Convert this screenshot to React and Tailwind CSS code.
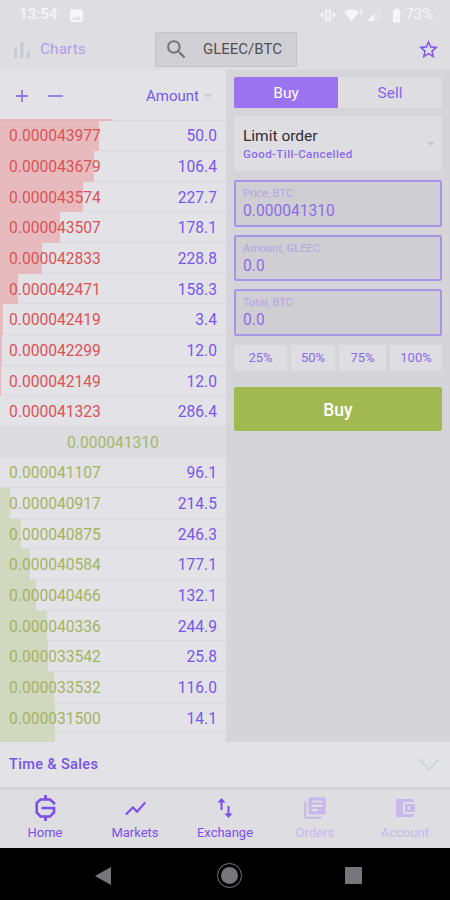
import { MdSearch, MdStarBorder, MdShowChart, MdLibraryBooks, MdAccountBalanceWallet, MdImage, MdBatteryFull } from 'react-icons/md'

const asks = [
  { price: '0.000043977', amount: '50.0', depth: 99 },
  { price: '0.000043679', amount: '106.4', depth: 94 },
  { price: '0.000043574', amount: '227.7', depth: 83 },
  { price: '0.000043507', amount: '178.1', depth: 60 },
  { price: '0.000042833', amount: '228.8', depth: 42 },
  { price: '0.000042471', amount: '158.3', depth: 18 },
  { price: '0.000042419', amount: '3.4', depth: 3 },
  { price: '0.000042299', amount: '12.0', depth: 2 },
  { price: '0.000042149', amount: '12.0', depth: 1 },
  { price: '0.000041323', amount: '286.4', depth: 0 },
]

const bids = [
  { price: '0.000041107', amount: '96.1', depth: 0 },
  { price: '0.000040917', amount: '214.5', depth: 10 },
  { price: '0.000040875', amount: '246.3', depth: 21 },
  { price: '0.000040584', amount: '177.1', depth: 30 },
  { price: '0.000040466', amount: '132.1', depth: 36 },
  { price: '0.000040336', amount: '244.9', depth: 47 },
  { price: '0.000033542', amount: '25.8', depth: 48 },
  { price: '0.000033532', amount: '116.0', depth: 54 },
  { price: '0.000031500', amount: '14.1', depth: 55 },
]

function StatusBar() {
  return (
    <div className="h-7 shrink-0 flex items-center pl-[19px] pr-[17px] pt-[2px] text-[#f6f5f8] text-[15.5px] font-medium">
      <span className="tracking-[-0.2px]">13:54</span>
      <MdImage className="ml-[11px] size-[17px]" />
      <svg viewBox="0 0 16 14" className="ml-auto w-4 h-[14px] opacity-80" fill="currentColor">
        <path d="M5 1h6v12H5zM3.6 3v8L0 7zM12.4 3v8L16 7z" />
        <path d="M7.4 3.5h1.2v7H7.4z" fill="#d9d8dc" />
      </svg>
      <svg viewBox="0 0 20 14" className="ml-2 w-5 h-[14px]" fill="currentColor">
        <path d="M0 4Q7.5-2 15 4L7.5 13zM16 1h2v2h-2zM16 4h2v2h-2z" />
      </svg>
      <svg viewBox="0 0 15 14" className="ml-[3px] w-[15px] h-[14px]" fill="currentColor">
        <path d="M0 13L7 6v7z" />
        <path d="M7 6l7-6v13H7z" opacity=".25" />
      </svg>
      <MdBatteryFull className="ml-[6px] size-[17px]" />
      <span className="font-normal tracking-[-0.3px]">73%</span>
    </div>
  )
}

function Header() {
  return (
    <div className="h-[42px] shrink-0 flex items-center justify-between pl-[12px] pr-[10px]">
      <div className="flex items-center w-[143px] pt-[1px] text-[#b19fe9] text-[15.5px]">
        <svg viewBox="0 0 20 16" className="w-5 h-4 mr-[8px]" fill="#c8cad2">
          <path d="M2 5h3v11H2zM8.5 0h3v16h-3zM15 9h3v7h-3z" />
        </svg>
        Charts
      </div>
      <div className="flex items-center w-[142px] h-[35px] rounded-[2px] border border-[#c4c3c8] bg-[#d0cfd4] pl-[8px] text-[#515056] text-[15px]">
        <MdSearch className="size-[25px] text-[#77767a]" />
        <span className="ml-[14px] pt-[1px]">GLEEC/BTC</span>
      </div>
      <div className="w-[143px] flex justify-end">
        <MdStarBorder className="size-[23px] text-[#8058ed]" />
      </div>
    </div>
  )
}

function Row({ row, bar, text }) {
  return (
    <div className="relative h-[30.65px] flex items-center justify-between pl-[9px] pr-[9px] pt-[3.5px] border-b border-[#dad9dd] text-[15.6px]">
      <div className={`absolute left-0 top-0 bottom-[-1px] ${bar}`} style={{ width: row.depth }} />
      <span className={`relative ${text}`}>{row.price}</span>
      <span className="relative text-[#7857ec]">{row.amount}</span>
    </div>
  )
}

function OrderBook() {
  return (
    <div className="w-[226px] h-full overflow-hidden bg-[#e3e2e6]">
      <div className="h-[48.5px] flex items-center pl-[16px] pr-[14px] pt-[3px] text-[#7857ec]">
        <svg viewBox="0 0 12 12" className="size-3" fill="none" stroke="#9378ec" strokeWidth="1.8">
          <path d="M6 0v12M0 6h12" />
        </svg>
        <div className="ml-[20px] h-[2px] w-[15px] bg-[#9b82ee]" />
        <span className="ml-auto text-[15px]">Amount</span>
        <div className="ml-[5px] border-x-[4px] border-x-transparent border-t-[4px] border-t-[#c8ccd4]" />
      </div>
      <div className="h-[2px] border-b border-[#dad9dd]">
        <div className="h-[2px] w-[113px] bg-[#e3b4b8]" />
      </div>
      {asks.map(row => (
        <Row key={row.price} row={row} bar="bg-[#e7bbbe]" text="text-[#dc5357]" />
      ))}
      <div className="h-[30.65px] flex items-center justify-center pt-[3px] bg-[#dcdbdf] text-[#a6b86a] text-[15.6px]">0.000041310</div>
      {bids.map(row => (
        <Row key={row.price} row={row} bar="bg-[#d2d7c0]" text="text-[#a3b560]" />
      ))}
      <div className="h-5 w-[55px] bg-[#d2d7c0]" />
    </div>
  )
}

function Field({ label, value }) {
  return (
    <div className="h-[46.5px] mb-[8px] rounded-[2px] border-2 border-[#a794e6] bg-[#cfced3] pl-[7px] pt-[5px]">
      <div className="text-[11px] leading-[13px] text-[#b3a3e5]">{label}</div>
      <div className="text-[15.6px] leading-[23.5px] text-[#8b6ce8]">{value}</div>
    </div>
  )
}

function TradeForm() {
  return (
    <div className="flex-1 pl-[8px] pr-[8px] pt-[7px]">
      <div className="flex h-[31px] rounded-[2px] overflow-hidden text-[15.5px]">
        <div className="w-[104px] flex items-center justify-center pt-[2px] bg-[#9b72f0] text-white">Buy</div>
        <div className="flex-1 flex items-center justify-center pt-[2px] bg-[#dedde1] text-[#8765eb]">Sell</div>
      </div>
      <div className="mt-[8px] mb-[9px] h-[55px] rounded-[2px] bg-[#dedde1] flex items-center justify-between pl-[9px] pr-[7px]">
        <div className="pt-[2px]">
          <div className="text-[15.5px] leading-[20px] text-[#2e2d31]">Limit order</div>
          <div className="text-[11.5px] leading-[17px] font-medium tracking-[0.42px] text-[#8b68f0]">Good-Till-Cancelled</div>
        </div>
        <div className="border-x-[4px] border-x-transparent border-t-[4px] border-t-[#bccdd8]" />
      </div>
      <Field label="Price, BTC" value="0.000041310" />
      <Field label="Amount, GLEEC" value="0.0" />
      <Field label="Total, BTC" value="0.0" />
      <div className="flex justify-between h-[26px] mt-[9px] text-[13px] text-[#8a6aea]">
        <div className="w-[53px] rounded-[2px] bg-[#dedde1] flex items-center justify-center">25%</div>
        <div className="w-[44px] rounded-[2px] bg-[#dedde1] flex items-center justify-center">50%</div>
        <div className="w-[47px] rounded-[2px] bg-[#dedde1] flex items-center justify-center">75%</div>
        <div className="w-[52px] rounded-[2px] bg-[#dedde1] flex items-center justify-center">100%</div>
      </div>
      <div className="mt-[16.5px] h-[44px] rounded-[2px] bg-[#a2b850] text-white text-[17.5px] font-medium flex items-center justify-center pt-[2px]">Buy</div>
    </div>
  )
}

function GleecIcon() {
  return (
    <svg viewBox="0 0 24 28" className="w-[24px] h-[28px]" fill="none" stroke="currentColor" strokeWidth="2.6">
      <path d="M21 10.5V9L17 5.5H7.5L3.7 9v9.5l3.8 4H17l4-4V14H8.5" />
      <path d="M12.5 1v4.5M12.5 22.5V27" strokeWidth="2.8" />
    </svg>
  )
}

function ExchangeIcon() {
  return (
    <svg viewBox="0 0 16 20" className="w-4 h-5" fill="currentColor">
      <path d="M4.5 0l4 4.5h-3V12h-2V4.5h-3zM11.5 20l-4-4.5h3V8h2v7.5h3z" />
    </svg>
  )
}

function Tab({ icon, label, muted }) {
  return (
    <div className={`flex-1 flex flex-col items-center text-[13px] ${muted ? 'text-[#c5b9e9]' : 'text-[#7b4fec]'}`}>
      <div className="h-[29px] mt-[4px] flex items-center justify-center">{icon}</div>
      <span className="mt-[1px] leading-[18px]">{label}</span>
    </div>
  )
}

export default function App() {
  return (
    <div className="w-[450px] h-[900px] overflow-hidden flex flex-col bg-[#dedde1] font-['Roboto',sans-serif]">
      <StatusBar />
      <Header />
      <div className="flex h-[671.5px] shrink-0 bg-[#d5d4d9]">
        <OrderBook />
        <TradeForm />
      </div>
      <div className="h-[45px] shrink-0 flex items-center justify-between bg-[#e3e2e6] pl-[9px] pr-[11px] pt-[1px] text-[14.5px] font-medium tracking-[0.36px] text-[#7653e9]">
        Time &amp; Sales
        <svg viewBox="0 0 20 12" className="w-5 h-3" fill="none" stroke="#c9d2d8" strokeWidth="1.5">
          <path d="M.5.5L10 10.5 19.5.5" />
        </svg>
      </div>
      <div className="h-[61.5px] shrink-0 flex border-t-[3px] border-[#d4d3d8]">
        <Tab icon={<GleecIcon />} label="Home" />
        <Tab icon={<MdShowChart className="size-[25px]" />} label="Markets" />
        <Tab icon={<ExchangeIcon />} label="Exchange" />
        <Tab icon={<MdLibraryBooks className="size-[26px]" />} label="Orders" muted />
        <Tab icon={<MdAccountBalanceWallet className="size-[24px]" />} label="Account" muted />
      </div>
      <div className="flex-1 bg-black flex items-center justify-between pl-[95px] pr-[88px] pt-[3px]">
        <div className="border-y-[9px] border-y-transparent border-r-[16px] border-r-[#77767a]" />
        <div className="size-[25px] ml-[2px] rounded-full border-[1.5px] border-[#77767a] flex items-center justify-center">
          <div className="size-[17px] rounded-full bg-[#77767a]" />
        </div>
        <div className="size-[17px] rounded-[1px] bg-[#77767a]" />
      </div>
    </div>
  )
}
